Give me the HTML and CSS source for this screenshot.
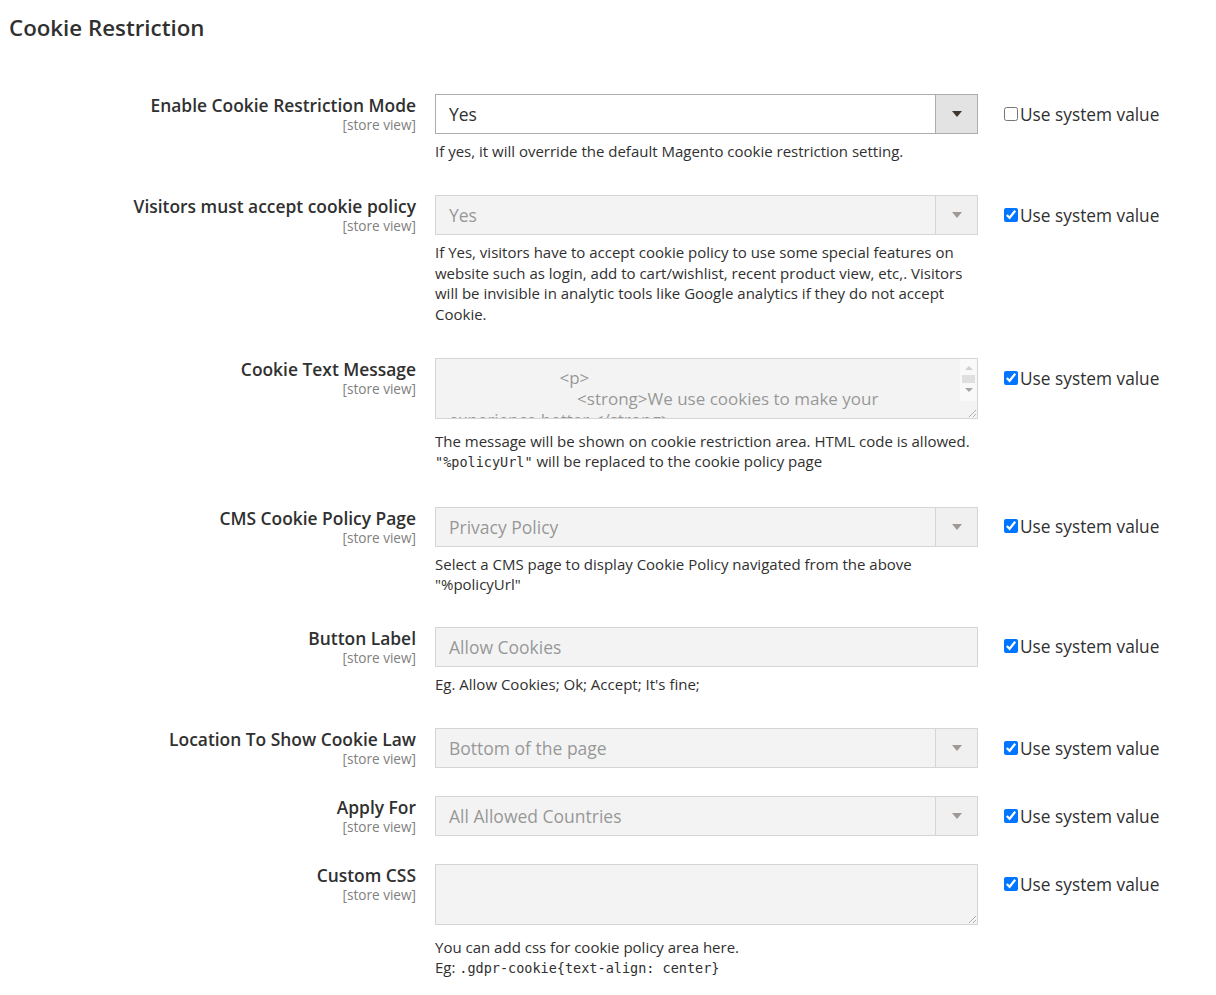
FILE: index.html
```html
<!DOCTYPE html>
<html lang="en">
<head>
<meta charset="utf-8">
<title>Cookie Restriction</title>
<link rel="stylesheet" href="styles.css">
</head>
<body>
<h2 class="section-title">Cookie Restriction</h2>
<div class="config">

  <div class="row">
    <div class="label"><span class="name">Enable Cookie Restriction Mode</span><span class="scope">[store view]</span></div>
    <div class="value">
      <div class="select"><span class="val">Yes</span><span class="arrow"><svg width="10" height="6" viewBox="0 0 10 6"><path d="M0 0h10L5 6z"/></svg></span></div>
      <p class="note">If yes, it will override the default Magento cookie restriction setting.</p>
    </div>
    <label class="use"><input type="checkbox">Use system value</label>
  </div>

  <div class="row">
    <div class="label"><span class="name">Visitors must accept cookie policy</span><span class="scope">[store view]</span></div>
    <div class="value">
      <div class="select disabled"><span class="val">Yes</span><span class="arrow"><svg width="10" height="6" viewBox="0 0 10 6"><path d="M0 0h10L5 6z"/></svg></span></div>
      <p class="note">If Yes, visitors have to accept cookie policy to use some special features on website such as login, add to cart/wishlist, recent product view, etc,. Visitors will be invisible in analytic tools like Google analytics if they do not accept Cookie.</p>
    </div>
    <label class="use"><input type="checkbox" checked>Use system value</label>
  </div>

  <div class="row">
    <div class="label"><span class="name">Cookie Text Message</span><span class="scope">[store view]</span></div>
    <div class="value">
      <div class="textarea-wrap disabled">
        <textarea class="textarea with-scroll" disabled>                         &lt;p&gt;
                             &lt;strong&gt;We use cookies to make your experience better.&lt;/strong&gt;
                             &lt;span&gt;To comply with the new e-Privacy directive, we need to ask for your consent to set the cookies.&lt;/span&gt;
                             &lt;a href="%policyUrl"&gt;Learn more&lt;/a&gt;.
                         &lt;/p&gt;</textarea>
        <div class="fake-scroll">
          <span class="sb-up"></span>
          <span class="sb-thumb"></span>
          <span class="sb-down"></span>
        </div>
      </div>
      <p class="note">The message will be shown on cookie restriction area. HTML code is allowed. <code>"%policyUrl"</code> will be replaced to the cookie policy page</p>
    </div>
    <label class="use"><input type="checkbox" checked>Use system value</label>
  </div>

  <div class="row">
    <div class="label"><span class="name">CMS Cookie Policy Page</span><span class="scope">[store view]</span></div>
    <div class="value">
      <div class="select disabled"><span class="val">Privacy Policy</span><span class="arrow"><svg width="10" height="6" viewBox="0 0 10 6"><path d="M0 0h10L5 6z"/></svg></span></div>
      <p class="note note-tight">Select a CMS page to display Cookie Policy navigated from the above "%policyUrl"</p>
    </div>
    <label class="use"><input type="checkbox" checked>Use system value</label>
  </div>

  <div class="row">
    <div class="label"><span class="name">Button Label</span><span class="scope">[store view]</span></div>
    <div class="value">
      <div class="input disabled">Allow Cookies</div>
      <p class="note">Eg. Allow Cookies; Ok; Accept; It's fine;</p>
    </div>
    <label class="use"><input type="checkbox" checked>Use system value</label>
  </div>

  <div class="row">
    <div class="label"><span class="name">Location To Show Cookie Law</span><span class="scope">[store view]</span></div>
    <div class="value">
      <div class="select disabled"><span class="val">Bottom of the page</span><span class="arrow"><svg width="10" height="6" viewBox="0 0 10 6"><path d="M0 0h10L5 6z"/></svg></span></div>
    </div>
    <label class="use"><input type="checkbox" checked>Use system value</label>
  </div>

  <div class="row">
    <div class="label"><span class="name">Apply For</span><span class="scope">[store view]</span></div>
    <div class="value">
      <div class="select disabled"><span class="val">All Allowed Countries</span><span class="arrow"><svg width="10" height="6" viewBox="0 0 10 6"><path d="M0 0h10L5 6z"/></svg></span></div>
    </div>
    <label class="use"><input type="checkbox" checked>Use system value</label>
  </div>

  <div class="row">
    <div class="label"><span class="name">Custom CSS</span><span class="scope">[store view]</span></div>
    <div class="value">
      <div class="textarea-wrap disabled">
        <textarea class="textarea" disabled></textarea>
      </div>
      <p class="note">You can add css for cookie policy area here.<br>Eg: <code>.gdpr-cookie{text-align: center}</code></p>
    </div>
    <label class="use"><input type="checkbox" checked>Use system value</label>
  </div>

</div>
</body>
</html>
```

FILE: styles.css
```css
* { box-sizing: border-box; }

html, body {
  margin: 0;
  padding: 0;
  background: #ffffff;
}

body {
  font-family: "Open Sans", "Liberation Sans", sans-serif;
  color: #303030;
}

.section-title {
  margin: 0;
  padding: 13px 0 0 9px;
  font-size: 22.3px;
  font-weight: 600;
  line-height: 30px;
  color: #303030;
}

.config {
  display: flex;
  flex-direction: column;
  gap: 28px;
  padding-top: 51px;
}

.row {
  display: flex;
  align-items: flex-start;
}

.label {
  width: 416px;
  flex: none;
  display: flex;
  flex-direction: column;
  align-items: flex-end;
  text-align: right;
  padding-top: 1px;
}

.name {
  font-size: 17.4px;
  font-weight: 600;
  line-height: 20px;
  color: #303030;
}

.scope {
  font-size: 13.6px;
  line-height: 19px;
  color: #808080;
}

.value {
  width: 543px;
  flex: none;
  margin-left: 19px;
}

.select,
.input {
  display: flex;
  align-items: center;
  height: 40px;
  border: 1px solid #adadad;
  background: #ffffff;
  font-size: 17.5px;
  color: #303030;
}

.select .val {
  flex: 1;
  padding-left: 13px;
}

.input {
  padding-left: 13px;
}

.select .arrow {
  width: 42px;
  height: 100%;
  flex: none;
  display: flex;
  align-items: center;
  justify-content: center;
  background: #e3e3e3;
  border-left: 1px solid #adadad;
}

.select .arrow svg {
  fill: #41362f;
}

.disabled {
  background: #e9e9e9;
  opacity: 0.5;
}

.textarea-wrap {
  position: relative;
  width: 543px;
  height: 61px;
  border: 1px solid #adadad;
}

.textarea {
  display: block;
  width: 100%;
  height: 59px;
  margin: 0;
  padding: 8px 13px;
  border: 0;
  background: transparent;
  font-family: "Open Sans", "Liberation Sans", sans-serif;
  font-size: 17px;
  line-height: 21px;
  color: #303030;
  resize: vertical;
  overflow: hidden;
}

.textarea.with-scroll {
  padding-right: 30px;
}

.fake-scroll {
  position: absolute;
  top: 0;
  right: 0;
  width: 17px;
  height: 42px;
  background: #f4f4f4;
  display: flex;
  flex-direction: column;
  align-items: center;
}

.sb-up,
.sb-down {
  width: 0;
  height: 0;
  border-left: 4px solid transparent;
  border-right: 4px solid transparent;
}

.sb-up {
  margin-top: 7px;
  border-bottom: 4px solid #a3a3a3;
}

.sb-thumb {
  width: 13px;
  height: 8px;
  margin-top: 5px;
  background: #c1c1c1;
}

.sb-down {
  margin-top: 5px;
  border-top: 4px solid #505050;
}

.note {
  margin: 7px 0 6px;
  font-size: 15px;
  line-height: 20.4px;
  color: #303030;
}

.note.note-tight {
  margin-bottom: 4px;
}

.textarea-wrap + .note {
  margin-top: 12px;
  margin-bottom: 6px;
}

.note code {
  font-family: "DejaVu Sans Mono", "Liberation Mono", monospace;
  font-size: 13.5px;
}

.use {
  display: flex;
  align-items: center;
  height: 40px;
  margin-left: 26px;
  font-size: 17.3px;
  color: #303030;
  white-space: nowrap;
}

.use input {
  width: 14px;
  height: 14px;
  margin: 0 2px 1px 0;
}
```
